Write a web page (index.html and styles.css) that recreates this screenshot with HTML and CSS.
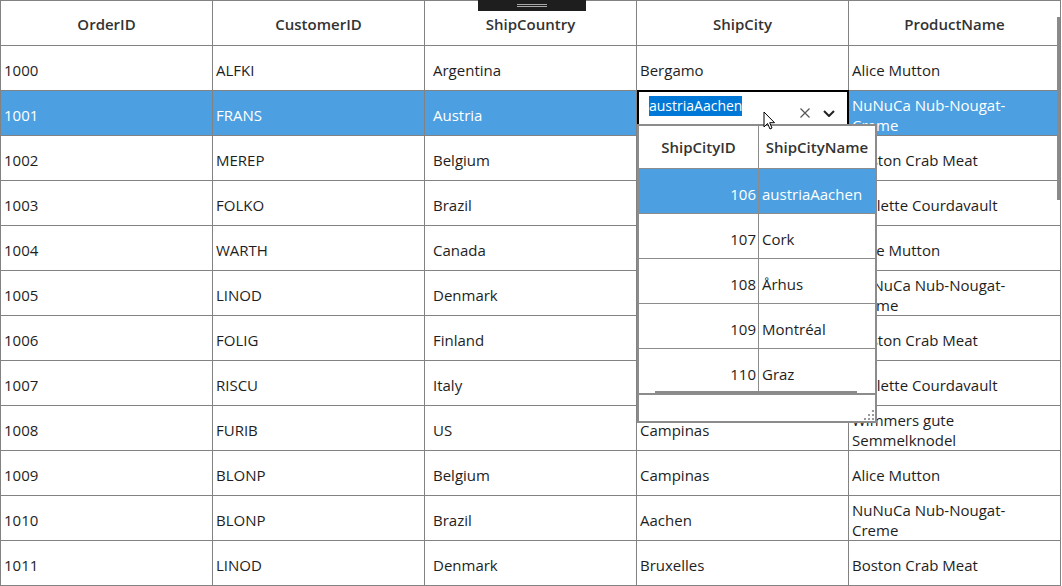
FILE: index.html
```html
<!DOCTYPE html>
<html lang="en">
<head>
    <meta charset="UTF-8">
    <title>Orders grid - ShipCity editor</title>
    <link rel="stylesheet" href="styles.css">
</head>
<body>

<div class="wrap">
    <div class="grid">
        <div class="cell head">OrderID</div>
        <div class="cell head">CustomerID</div>
        <div class="cell head">ShipCountry</div>
        <div class="cell head">ShipCity</div>
        <div class="cell head">ProductName</div>

        <div class="cell">1000</div><div class="cell">ALFKI</div><div class="cell country">Argentina</div><div class="cell">Bergamo</div><div class="cell">Alice Mutton</div>
        <div class="cell sel">1001</div><div class="cell sel">FRANS</div><div class="cell sel country">Austria</div><div class="cell sel"></div><div class="cell sel">NuNuCa Nub-Nougat-Creme</div>
        <div class="cell">1002</div><div class="cell">MEREP</div><div class="cell country">Belgium</div><div class="cell"></div><div class="cell">Boston Crab Meat</div>
        <div class="cell">1003</div><div class="cell">FOLKO</div><div class="cell country">Brazil</div><div class="cell"></div><div class="cell">Raclette Courdavault</div>
        <div class="cell">1004</div><div class="cell">WARTH</div><div class="cell country">Canada</div><div class="cell"></div><div class="cell">Alice Mutton</div>
        <div class="cell">1005</div><div class="cell">LINOD</div><div class="cell country">Denmark</div><div class="cell"></div><div class="cell">NuNuCa Nub-Nougat-Creme</div>
        <div class="cell">1006</div><div class="cell">FOLIG</div><div class="cell country">Finland</div><div class="cell"></div><div class="cell">Boston Crab Meat</div>
        <div class="cell">1007</div><div class="cell">RISCU</div><div class="cell country">Italy</div><div class="cell"></div><div class="cell">Raclette Courdavault</div>
        <div class="cell">1008</div><div class="cell">FURIB</div><div class="cell country">US</div><div class="cell">Campinas</div><div class="cell">Wimmers gute Semmelknodel</div>
        <div class="cell">1009</div><div class="cell">BLONP</div><div class="cell country">Belgium</div><div class="cell">Campinas</div><div class="cell">Alice Mutton</div>
        <div class="cell">1010</div><div class="cell">BLONP</div><div class="cell country">Brazil</div><div class="cell">Aachen</div><div class="cell">NuNuCa Nub-Nougat-Creme</div>
        <div class="cell">1011</div><div class="cell">LINOD</div><div class="cell country">Denmark</div><div class="cell">Bruxelles</div><div class="cell">Boston Crab Meat</div>
    </div>

    <div class="vscroll"></div>

    <div class="grip-bar"><span></span><span></span></div>

    <!-- ShipCity editor -->
    <div class="editor">
        <span class="picked">austriaAachen</span>
        <svg class="clear" width="10" height="10" viewBox="0 0 10 10"><path d="M0.5 0.5 L9.5 9.5 M9.5 0.5 L0.5 9.5" stroke="#555" stroke-width="1.2" fill="none"/></svg>
        <svg class="chev" width="12" height="7" viewBox="0 0 12 7"><path d="M1 1 L6 6 L11 1" stroke="#222" stroke-width="2" fill="none"/></svg>
    </div>

    <div class="popup">
        <div class="dd-grid">
            <div class="dd-table">
                <div class="dd-cell dd-head">ShipCityID</div><div class="dd-cell dd-head">ShipCityName</div>
                <div class="dd-cell num dd-sel">106</div><div class="dd-cell dd-sel">austriaAachen</div>
                <div class="dd-cell num">107</div><div class="dd-cell">Cork</div>
                <div class="dd-cell num">108</div><div class="dd-cell">Århus</div>
                <div class="dd-cell num">109</div><div class="dd-cell">Montréal</div>
                <div class="dd-cell num">110</div><div class="dd-cell">Graz</div>
            </div>
            <div class="hscroll"></div>
        </div>
        <div class="dd-foot">
            <svg class="resize" width="11" height="11" viewBox="0 0 11 11" fill="#9a9a9a">
                <rect x="8" y="0" width="2" height="2"/>
                <rect x="4" y="4" width="2" height="2"/><rect x="8" y="4" width="2" height="2"/>
                <rect x="0" y="8" width="2" height="2"/><rect x="4" y="8" width="2" height="2"/><rect x="8" y="8" width="2" height="2"/>
            </svg>
        </div>
    </div>

    <svg class="cursor" width="13" height="20" viewBox="0 0 13 20"><path d="M1 1 L1 16 L4.5 12.5 L7 18 L9 17 L6.7 11.7 L11.5 11.7 Z" fill="#fff" stroke="#000" stroke-width="1" stroke-linejoin="round"/></svg>
</div>

</body>
</html>
```

FILE: styles.css
```css
body {
    margin: 0;
    font-family: 'Open Sans', 'Noto Sans', Arial, sans-serif;
    font-size: 15px;
    color: #1e1e1e;
    background-color: white;
}
.wrap {
    position: relative;
    width: 1062px;
    height: 586px;
    overflow: hidden;
}
.grid {
    display: grid;
    grid-template-columns: repeat(5, 212px);
    grid-auto-rows: 45px;
    border-left: 1px solid #828282;
    border-top: 1px solid #828282;
    width: max-content;
}
.cell {
    box-sizing: border-box;
    border-right: 1px solid #828282;
    border-bottom: 1px solid #828282;
    display: flex;
    align-items: center;
    padding: 4px 10px 0 3px;
    line-height: 20px;
    overflow: hidden;
}
.head {
    justify-content: center;
    font-weight: 600;
    color: #333;
    padding: 1px 0 0 0;
}
.country {
    padding-left: 8px;
}
.sel {
    background-color: #4c9fe0;
    color: white;
}
.vscroll {
    position: absolute;
    left: 1057px;
    top: 17px;
    width: 3px;
    height: 183px;
    background-color: #8a8a8a;
}
.grip-bar {
    position: absolute;
    left: 478px;
    top: 0;
    width: 108px;
    height: 11px;
    background-color: #1e1e1e;
    display: flex;
    flex-direction: column;
    align-items: center;
    justify-content: center;
    gap: 1px;
}
.grip-bar span {
    width: 30px;
    height: 1px;
    background-color: #a8a8a8;
}
/* ShipCity editor */
.editor {
    position: absolute;
    left: 637px;
    top: 90px;
    width: 212px;
    height: 45px;
    box-sizing: border-box;
    border: 2px solid #000;
    background-color: white;
}
.picked {
    position: absolute;
    left: 10px;
    top: 4px;
    background-color: #0078d7;
    color: white;
    font-size: 14px;
    line-height: 20px;
}
.clear {
    position: absolute;
    left: 161px;
    top: 16px;
}
.chev {
    position: absolute;
    left: 184px;
    top: 18px;
}
.popup {
    position: absolute;
    left: 637px;
    top: 124px;
    width: 240px;
    height: 299px;
    box-sizing: border-box;
    border: 2px solid #8c8c8c;
    background-color: white;
    display: flex;
    flex-direction: column;
}
.dd-grid {
    position: relative;
    height: 269px;
    overflow: hidden;
    border-bottom: 1px solid #8c8c8c;
    box-sizing: border-box;
}
.dd-table {
    display: grid;
    grid-template-columns: 120px 116px;
    grid-template-rows: 43px;
    grid-auto-rows: 45px;
}
.dd-cell {
    box-sizing: border-box;
    border-bottom: 1px solid #8c8c8c;
    display: flex;
    align-items: center;
    padding: 5px 3px 0 3px;
    line-height: 20px;
    white-space: nowrap;
}
.dd-cell:nth-child(odd) {
    border-right: 1px solid #8c8c8c;
}
.dd-head {
    justify-content: center;
    font-weight: 600;
    color: #333;
    padding-top: 0;
}
.num {
    justify-content: flex-end;
    padding-right: 2px;
}
.dd-sel {
    background-color: #4c9fe0;
    color: white;
}
.hscroll {
    position: absolute;
    left: 16px;
    bottom: 1px;
    width: 202px;
    height: 2px;
    background-color: #8a8a8a;
}
.dd-foot {
    flex: 1;
    position: relative;
}
.resize {
    position: absolute;
    right: 0;
    bottom: 0;
}
.cursor {
    position: absolute;
    left: 763px;
    top: 111px;
}
```
